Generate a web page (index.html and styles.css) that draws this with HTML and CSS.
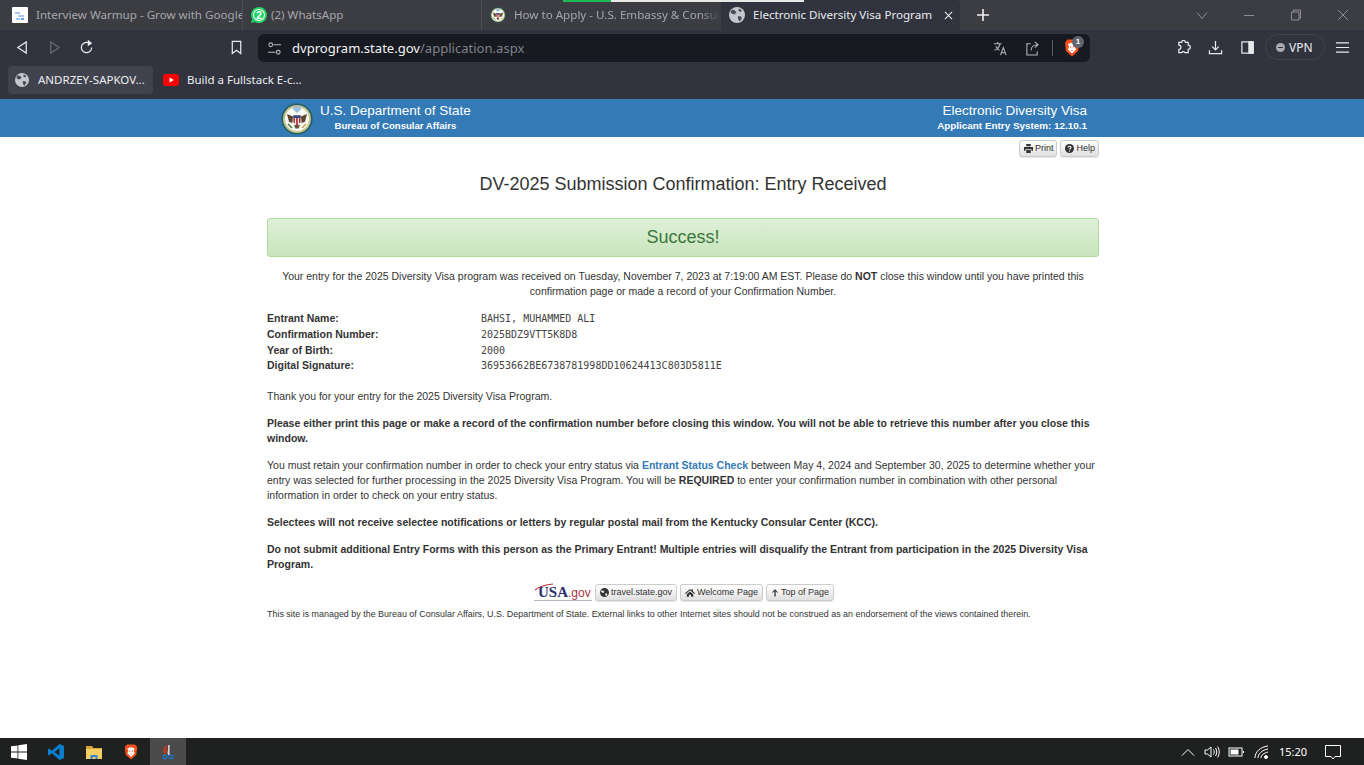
FILE: index.html
```html
<!DOCTYPE html>
<html lang="en">
<head>
    <meta charset="UTF-8">
    <title>Electronic Diversity Visa Program</title>
    <link rel="stylesheet" href="styles.css">
</head>
<body>
<div class="app">
    <!-- Browser tabs -->
    <div class="tabstrip">
        <div class="progress"><span class="progress-green"></span><span class="progress-white"></span></div>
        <div class="tab tab-first">
            <svg class="fav" viewBox="0 0 16 16"><rect width="16" height="16" rx="1" fill="#fff"/><path d="M3 6h5M6 9h6M4 12h4" stroke="#8ab4e8" stroke-width="1.6"/><path d="M9 12h3" stroke="#4285f4" stroke-width="1.6"/></svg>
            <span class="tab-title">Interview Warmup - Grow with Google</span>
        </div>
        <div class="tab tab-wa">
            <svg class="fav" viewBox="0 0 16 16"><path d="M8 0a8 8 0 0 0-6.800 12.200L0 16l3.900-1.100A8 8 0 1 0 8 0z" fill="#25d366"/><circle cx="8" cy="8" r="6" fill="#fff"/><circle cx="8" cy="8" r="5" fill="#25d366"/><text x="8" y="11.500" class="wa-count">2</text></svg>
            <span class="tab-title">(2) WhatsApp</span>
        </div>
        <div class="tab tab-third">
            <svg class="fav" viewBox="0 0 16 16"><use href="#seal"/></svg>
            <span class="tab-title tab-fade">How to Apply - U.S. Embassy &amp; Consulate</span>
        </div>
        <div class="tab tab-active">
            <svg class="fav" viewBox="0 0 16 16"><use href="#globe"/></svg>
            <span class="tab-title">Electronic Diversity Visa Program</span>
            <svg class="tab-close" viewBox="0 0 10 10"><path d="M1 1l8 8M9 1l-8 8"/></svg>
        </div>
        <svg class="tab-new" viewBox="0 0 12 12"><path d="M6 0v12M0 6h12"/></svg>
        <div class="win-controls">
            <svg viewBox="0 0 12 12"><path d="M1 3.500l5 6 5-6"/></svg>
            <svg viewBox="0 0 12 12"><path d="M1 6.500h10"/></svg>
            <svg viewBox="0 0 12 12"><path d="M1.500 3h7.500v8h-7.500zM3.500 3V1h7v8h-1.500"/></svg>
            <svg viewBox="0 0 12 12"><path d="M1 1l10 10M11 1L1 11"/></svg>
        </div>
    </div>

    <!-- Address bar -->
    <div class="toolbar">
        <svg class="tool" viewBox="0 0 16 16"><path d="M12 2v12L3 8z"/></svg>
        <svg class="tool tool-off" viewBox="0 0 16 16"><path d="M4 2v12l9-6z"/></svg>
        <svg class="tool" viewBox="0 0 16 16"><path d="M13.500 8A5.500 5.500 0 1 1 11 3.400"/><path d="M10 1l3 2.500-3 2z" fill="#e8eaed"/></svg>
        <svg class="tool tool-mark" viewBox="0 0 16 16"><path d="M3.500 1.500h9v13L8 11l-4.500 3.500z"/></svg>
        <div class="urlbar">
            <svg class="tool-sm" viewBox="0 0 16 16"><circle cx="4" cy="4" r="2"/><path d="M7 4h8M1 12h8"/><circle cx="12" cy="12" r="2"/></svg>
            <span class="url"><span class="url-host">dvprogram.state.gov</span>/application.aspx</span>
            <svg class="tool-sm url-translate" viewBox="0 0 16 16"><path d="M1 3h8M5 1v2M7.500 3C7 6 4.500 8.500 1.500 10M3 5.500c1 2 2.500 3.500 4 4.500M8 15l3-8 3 8M9.200 12.500h3.600"/></svg>
            <svg class="tool-sm url-share" viewBox="0 0 16 16"><path d="M6 3H2v12h11v-4M6.500 10c0-4 3-6 7-6M10.500 1l3.500 3-3.500 3"/></svg>
            <span class="url-sep"></span>
            <span class="shield">
                <svg class="brave" viewBox="0 0 16 18"><use href="#brave"/></svg>
                <span class="badge">1</span>
            </span>
        </div>
        <svg class="tool tool-ext" viewBox="0 0 16 16"><path d="M6 2.500a2 2 0 0 1 4 0h3v3a2 2 0 0 1 0 4.500v3.500H9.500a2 2 0 0 0-3.500 0H3V10a2 2 0 0 0 0-4.500V2.500z"/></svg>
        <svg class="tool" viewBox="0 0 16 16"><path d="M8 1v9M4.500 7L8 10.500 11.500 7M1.500 11v3.500h13V11"/></svg>
        <svg class="tool tool-side" viewBox="0 0 16 16"><rect x="2" y="2" width="12" height="12"/><rect x="9.500" y="2" width="4.500" height="12" fill="#e8eaed"/></svg>
        <div class="vpn"><span class="vpn-dot"></span>VPN</div>
        <svg class="tool tool-menu" viewBox="0 0 16 16"><path d="M1 3h14M1 8h14M1 13h14"/></svg>
    </div>

    <!-- Bookmarks -->
    <div class="bookmarks">
        <div class="bookmark bookmark-active">
            <svg class="fav-sm" viewBox="0 0 16 16"><use href="#globe"/></svg>
            <span class="bookmark-name">ANDRZEY-SAPKOV...</span>
        </div>
        <div class="bookmark">
            <svg class="fav-yt" viewBox="0 0 16 12"><rect width="16" height="12" rx="3" fill="#f00"/><path d="M6.500 3.500v5L11 6z" fill="#fff"/></svg>
            <span class="bookmark-name">Build a Fullstack E-c...</span>
        </div>
    </div>

    <!-- Page -->
    <div class="page">
        <header class="site-head">
            <div class="wrap site-head-inner">
                <div class="dept">
                    <svg class="seal" viewBox="0 0 16 16"><use href="#seal"/></svg>
                    <div>
                        <div class="head-title">U.S. Department of State</div>
                        <div class="head-sub head-sub-left">Bureau of Consular Affairs</div>
                    </div>
                </div>
                <div class="system">
                    <div class="head-title">Electronic Diversity Visa</div>
                    <div class="head-sub head-sub-right">Applicant Entry System: 12.10.1</div>
                </div>
            </div>
        </header>

        <main class="wrap">
            <div class="page-tools">
                <a class="small-btn">
                    <svg class="fa" viewBox="0 0 12 12"><path d="M3 0h6v3H3zM0 4h12v5h-2V7H2v2H0zM3 8h6v4H3z"/></svg>Print
                </a>
                <a class="small-btn">
                    <svg class="fa" viewBox="0 0 12 12"><circle cx="6" cy="6" r="6"/><path class="fa-cut" d="M4 4.500C4 2.500 8 2.500 8 4.500 8 6 6 5.800 6 7.300M6 8.500v1.500"/></svg>Help
                </a>
            </div>

            <h1>DV-2025 Submission Confirmation: Entry Received</h1>

            <div class="alert-success">Success!</div>

            <p class="received">Your entry for the 2025 Diversity Visa program was received on Tuesday, November 7, 2023 at 7:19:00 AM EST. Please do <b>NOT</b> close this window until you have printed this confirmation page or made a record of your Confirmation Number.</p>

            <dl class="details">
                <dt>Entrant Name:</dt><dd>BAHSI, MUHAMMED ALI</dd>
                <dt>Confirmation Number:</dt><dd>2025BDZ9VTT5K8D8</dd>
                <dt>Year of Birth:</dt><dd>2000</dd>
                <dt>Digital Signature:</dt><dd>36953662BE6738781998DD10624413C803D5811E</dd>
            </dl>

            <p>Thank you for your entry for the 2025 Diversity Visa Program.</p>
            <p><b>Please either print this page or make a record of the confirmation number before closing this window. You will not be able to retrieve this number after you close this window.</b></p>
            <p>You must retain your confirmation number in order to check your entry status via <a class="link">Entrant Status Check</a> between May 4, 2024 and September 30, 2025 to determine whether your entry was selected for further processing in the 2025 Diversity Visa Program. You will be <b>REQUIRED</b> to enter your confirmation number in combination with other personal information in order to check on your entry status.</p>
            <p><b>Selectees will not receive selectee notifications or letters by regular postal mail from the Kentucky Consular Center (KCC).</b></p>
            <p><b>Do not submit additional Entry Forms with this person as the Primary Entrant! Multiple entries will disqualify the Entrant from participation in the 2025 Diversity Visa Program.</b></p>

            <div class="foot-links">
                <span class="usagov">
                    <svg class="usagov-swoosh" viewBox="0 0 20 8"><path d="M1 7C6 3 12 1.500 19 1" fill="none" stroke="#b5343c" stroke-width="1.100"/></svg>
                    <span class="usagov-usa">USA</span><span class="usagov-gov">.gov</span>
                </span>
                <a class="small-btn">
                    <svg class="fa" viewBox="0 0 12 12"><use href="#globe-solid"/></svg>travel.state.gov
                </a>
                <a class="small-btn">
                    <svg class="fa fa-wide" viewBox="0 0 14 12"><path d="M7 1L0 7l1 1 6-5 6 5 1-1-3-2.600V1.500H9.500V3zM2.500 8.500L7 4.500l4.500 4V12H8.500V9h-3v3h-3z"/></svg>Welcome Page
                </a>
                <a class="small-btn">
                    <svg class="fa fa-narrow" viewBox="0 0 12 12"><path d="M6 1L1.500 5.500l1 1L5 4v8h2V4l2.500 2.500 1-1z"/></svg>Top of Page
                </a>
            </div>
            <p class="managed">This site is managed by the Bureau of Consular Affairs, U.S. Department of State. External links to other Internet sites should not be construed as an endorsement of the views contained therein.</p>
        </main>
    </div>

    <!-- Windows taskbar -->
    <footer class="taskbar">
        <div class="task-icon">
            <svg class="task-svg" viewBox="0 0 16 16"><path d="M0 2.300l6.500-.9v6.200H0zM7.300 1.300L16 0v7.600H7.300zM0 8.400h6.500v6.200L0 13.700zM7.300 8.400H16V16l-8.700-1.200z" fill="#fff"/></svg>
        </div>
        <div class="task-icon">
            <svg class="task-svg" viewBox="0 0 16 16"><path d="M11.500 0L16 2v12l-4.500 2L4 9.200 1.200 11.400 0 10.800V5.200l1.200-.6L4 6.800z" fill="#0e7fd0"/><path d="M11.500 4.200L6.500 8l5 3.800z" fill="#1f2020"/></svg>
        </div>
        <div class="task-icon">
            <svg class="task-svg" viewBox="0 0 16 16"><path d="M0 2h6l1.500 2H16v3H0z" fill="#d9a53a"/><path d="M0 5h16v10H0z" fill="#f5cf63"/><path d="M4.500 15v-4h7v4H9.500v-2h-3v2z" fill="#2f86d1"/></svg>
        </div>
        <div class="task-icon">
            <svg class="task-svg" viewBox="0 0 16 18"><use href="#brave"/></svg>
        </div>
        <div class="task-icon task-active">
            <svg class="task-svg" viewBox="0 0 16 16"><path d="M7 1a6 6 0 0 0-2 10l2-3z" fill="#b5391e"/><path d="M9 1L8 10l1 1z" fill="#ddd" stroke="#ddd"/><circle cx="5" cy="13" r="1.800" fill="none" stroke="#1b78d0" stroke-width="1.300"/><circle cx="11" cy="13" r="1.800" fill="none" stroke="#1b78d0" stroke-width="1.300"/></svg>
        </div>
        <div class="tray">
            <svg class="tray-svg" viewBox="0 0 16 14"><path d="M2 10.500l6-6 6 6"/></svg>
            <svg class="tray-svg" viewBox="0 0 16 14"><path d="M1 5h2.500L7 2v10L3.500 9H1zM9.500 4.500c1 1.500 1 3.500 0 5M11.500 3c1.700 2.500 1.700 5.500 0 8M13.500 1.500c2.300 3 2.300 8 0 11"/></svg>
            <svg class="tray-svg" viewBox="0 0 16 14"><rect x="1" y="3" width="13" height="8"/><rect x="2.500" y="4.500" width="8" height="5" fill="#fff" stroke="none"/><path d="M15.500 6v2"/></svg>
            <svg class="tray-svg tray-wifi" viewBox="0 0 16 14"><path d="M1 13C1 7 6 2 14 1M4 13c0-4 4-8 10-9M7 13c0-3 3-5 7-6"/><circle cx="12" cy="12" r="1.500" fill="#fff"/></svg>
            <span class="clock">15:20</span>
            <svg class="tray-note" viewBox="0 0 16 16"><path d="M.5 1.500h15v11H10L8 15l-2-2.500H.5z"/></svg>
        </div>
    </footer>
</div>

<!-- Shared icons -->
<svg class="defs" aria-hidden="true">
    <symbol id="globe" viewBox="0 0 16 16">
        <circle cx="8" cy="8" r="8" fill="#c4c7cc"/>
        <path d="M3 2.500l3 1 1.500 2-2 2-3-1-1-1.500zM9 9l3 .5 1 2-2.500 3-1.500-2.500zM10 1.500l3 2-1.500 1.500-2-1z" fill="#4a4d57"/>
    </symbol>
    <symbol id="globe-solid" viewBox="0 0 12 12">
        <path d="M6 0a6 6 0 1 0 0 12A6 6 0 0 0 6 0zM2 3l2.500.5L6 5 4.500 6.500 2 5.500 1.300 4.500zM7 7l2.500.5.500 1.500-2 2-1-2z"/>
    </symbol>
    <symbol id="brave" viewBox="0 0 16 18">
        <path d="M3.500 .5h9L15 3.500 14 12l-6 5.500L2 12 1 3.500z" fill="#f1501f"/>
        <path d="M4 5l2.500-1h3L12 5l-1 3 1 2.500-4 4-4-4L5 8z" fill="#fff"/>
        <path d="M5.500 7l2 1-1 1zM10.500 7l-2 1 1 1zM7 11h2l-1 1.500z" fill="#f1501f"/>
    </symbol>
    <symbol id="seal" viewBox="0 0 16 16">
        <circle cx="8" cy="8" r="7.800" fill="#1f5f62"/>
        <circle cx="8" cy="8" r="7" fill="#c9c48e"/>
        <circle cx="8" cy="8" r="6" fill="#fbfbf6"/>
        <path d="M5.800 3a2.400 2.400 0 0 1 4.400 0L8 5z" fill="#9cc0de"/>
        <path d="M3 5.500l3 1.200-.3 3.300-1.700-.6zM13 5.500l-3 1.200.3 3.300 1.700-.6z" fill="#5b4630"/>
        <path d="M6.500 11h3l-.7 1.700H7.200z" fill="#6b5740"/>
        <path d="M6.200 6.200h3.600v3.400L8 11.300 6.200 9.600z" fill="#b5343c"/>
        <rect x="6.200" y="6.200" width="3.600" height="1.300" fill="#2d4f87"/>
        <path d="M7.300 7.500v3M8.700 7.500v3" stroke="#fff" stroke-width=".5"/>
        <path d="M3.500 10.500l2 2" stroke="#4f7a3a" stroke-width=".8"/>
        <path d="M12.500 10.500l-2 2" stroke="#c8a24a" stroke-width=".8"/>
    </symbol>
</svg>
</body>
</html>
```

FILE: styles.css
```css
* {
    box-sizing: border-box;
}

body {
    margin: 0;
    font-family: "Liberation Sans", Arial, sans-serif;
    color: #333;
    overflow: hidden;
}

.app {
    display: flex;
    flex-direction: column;
    height: 100vh;
}

.defs {
    display: none;
}

/* Tabs */
.tabstrip {
    position: relative;
    display: flex;
    align-items: stretch;
    flex: 0 0 30px;
    background: #3c3c43;
    font-family: "Noto Sans", sans-serif;
    font-size: 11.600px;
    color: #a6a7ab;
}

.progress {
    position: absolute;
    top: 0;
    left: 563px;
    display: flex;
    height: 2px;
}

.progress-green {
    width: 48px;
    background: #1db954;
}

.progress-white {
    width: 193px;
    background: #e8e8e8;
}

.tab {
    display: flex;
    align-items: center;
    width: 239px;
    white-space: nowrap;
    overflow: hidden;
}

.tab-first {
    width: 243px;
    padding-left: 12px;
    border-right: 1px solid #4c4c53;
}

.tab-wa {
    padding-left: 8px;
    border-right: 1px solid #4c4c53;
}

.tab-third {
    padding-left: 8px;
}

.tab-title {
    margin-bottom: 2px;
}

.fav {
    flex: none;
    width: 16px;
    height: 16px;
    margin-right: 8px;
}

.tab-wa .fav {
    margin-right: 4px;
}

.wa-count {
    font-family: "Liberation Sans", sans-serif;
    font-size: 10px;
    font-weight: bold;
    fill: #fff;
    text-anchor: middle;
}

.tab-fade {
    overflow: hidden;
    -webkit-mask-image: linear-gradient(to right, #000 90%, transparent);
    mask-image: linear-gradient(to right, #000 90%, transparent);
}

.tab-active {
    width: 239px;
    padding-left: 8px;
    background: #31343f;
    border-radius: 4px 4px 0 0;
    color: #e8eaed;
}

.tab-close {
    flex: none;
    width: 9px;
    height: 9px;
    margin-left: 12px;
    fill: none;
    stroke: #e8eaed;
    stroke-width: 1.200;
}

.tab-new {
    width: 12px;
    height: 12px;
    margin: 9px 0 0 17px;
    fill: none;
    stroke: #f0f0f0;
    stroke-width: 1.600;
}

.win-controls {
    display: flex;
    align-items: center;
    gap: 35px;
    margin-left: auto;
    padding-right: 15px;
}

.win-controls svg {
    width: 12px;
    height: 12px;
    fill: none;
    stroke: #8e8f94;
    stroke-width: 1;
}

/* Toolbar */
.toolbar {
    display: flex;
    align-items: center;
    flex: 0 0 34px;
    padding-left: 15px;
    background: #31343f;
}

.tool {
    flex: none;
    width: 15px;
    height: 15px;
    margin-right: 17px;
    fill: none;
    stroke: #e8eaed;
    stroke-width: 1.300;
}

.tool-off {
    stroke: #666a75;
}

.tool-mark {
    margin-left: 118px;
    margin-right: 14px;
}

.tool-ext {
    margin-left: 86px;
}

.tool-side {
    margin-right: 10px;
}

.tool-menu {
    margin: 0 0 0 10px;
}

.tool-sm {
    flex: none;
    width: 15px;
    height: 15px;
    fill: none;
    stroke: #b5b8bf;
    stroke-width: 1.100;
}

.urlbar {
    display: flex;
    align-items: center;
    flex: 0 0 832px;
    height: 28px;
    margin-top: 2px;
    padding: 0 9px;
    background: #181a21;
    border-radius: 6px;
}

.url {
    margin-left: 10px;
    font-family: "Noto Sans", sans-serif;
    font-size: 13.050px;
    color: #7f828b;
}

.url-host {
    color: #f1f2f4;
}

.url-translate {
    margin-left: auto;
}

.url-share {
    margin-left: 17px;
}

.url-sep {
    width: 1px;
    height: 16px;
    margin: 0 11px 0 12px;
    background: #5b5e68;
}

.shield {
    position: relative;
    display: flex;
    margin-right: 1px;
}

.brave {
    width: 16px;
    height: 18px;
}

.badge {
    position: absolute;
    top: -3px;
    left: 8px;
    width: 12px;
    height: 12px;
    border-radius: 50%;
    background: #5f636e;
    color: #fff;
    font-size: 8px;
    font-weight: bold;
    line-height: 12px;
    text-align: center;
}

.vpn {
    display: flex;
    align-items: center;
    gap: 4px;
    width: 60px;
    height: 26px;
    padding-left: 10px;
    border: 1px solid #41444f;
    border-radius: 13px;
    font-family: "Noto Sans", sans-serif;
    font-size: 12px;
    color: #e8eaed;
}

.vpn-dot {
    position: relative;
    width: 9px;
    height: 9px;
    border-radius: 50%;
    background: #a8abb3;
}

.vpn-dot::after {
    content: "";
    position: absolute;
    top: 4px;
    left: 2px;
    width: 5px;
    height: 1px;
    background: #31343f;
}

/* Bookmarks */
.bookmarks {
    display: flex;
    align-items: center;
    flex: 0 0 35px;
    padding: 0 8px 3px;
    background: #31343f;
    font-family: "Noto Sans", sans-serif;
    font-size: 11.500px;
    color: #eceef1;
    white-space: nowrap;
}

.bookmark {
    display: flex;
    align-items: center;
    height: 28px;
    padding: 0 8px 0 10px;
}

.bookmark-active {
    width: 145px;
    padding-left: 7px;
    background: #40434e;
    border-radius: 4px;
}

.bookmark-name {
    margin-bottom: 2px;
}

.fav-sm {
    flex: none;
    width: 14px;
    height: 14px;
    margin-right: 9px;
}

.fav-yt {
    flex: none;
    width: 16px;
    height: 12px;
    margin-right: 8px;
}

/* Page */
.page {
    flex: 1;
    background: #fff;
    border-top: 1px solid #3a7fbc;
    font-size: 10.500px;
    line-height: 15px;
}

.wrap {
    width: 832px;
    margin-left: 267px;
}

.site-head {
    height: 37px;
    background: #337ab7;
    color: #fff;
}

.site-head-inner {
    display: flex;
    justify-content: space-between;
    height: 100%;
    padding: 3px 12px 0 14px;
}

.dept {
    display: flex;
    gap: 7px;
}

.seal {
    width: 32px;
    height: 32px;
}

.head-title {
    font-size: 13.500px;
    line-height: 15px;
}

.head-sub {
    margin-top: 1px;
    font-weight: bold;
    line-height: 14px;
}

.head-sub-left {
    font-size: 9.600px;
    text-align: center;
}

.head-sub-right {
    font-size: 9.900px;
}

.system {
    text-align: right;
}

.page-tools {
    display: flex;
    justify-content: flex-end;
    gap: 3px;
    height: 20px;
    padding-top: 3px;
}

.page-tools .small-btn {
    padding-right: 3px;
}

.small-btn {
    display: inline-flex;
    align-items: center;
    gap: 2px;
    height: 17px;
    padding: 0 4px;
    border: 1px solid #ccc;
    border-radius: 3px;
    background: linear-gradient(#fff, #e0e0e0);
    box-shadow: 0 1px 1px rgba(0, 0, 0, 0.1);
    font-size: 9px;
    color: #333;
}

.fa {
    width: 9px;
    height: 9px;
    fill: #333;
}

.fa-wide {
    width: 10px;
}

.fa-narrow {
    width: 8px;
}

.fa-cut {
    fill: none;
    stroke: #fff;
    stroke-width: 1.500;
}

h1 {
    margin: 17px 0 24px;
    font-size: 18px;
    font-weight: normal;
    line-height: 20px;
    text-align: center;
}

.alert-success {
    height: 39px;
    border: 1px solid #b2dba1;
    border-radius: 3px;
    background: linear-gradient(#dff0d8, #c8e5bc);
    color: #3c763d;
    font-size: 18px;
    line-height: 36px;
    text-align: center;
}

p {
    margin: 0 0 12px;
}

.received {
    margin: 12px 0;
    text-align: center;
}

.details {
    display: grid;
    grid-template-columns: 214px 1fr;
    grid-auto-rows: 15.800px;
    margin: 0 0 14.600px;
}

.details dt {
    font-weight: bold;
}

.details dd {
    margin: 0;
    font-family: "DejaVu Sans Mono", monospace;
    font-size: 10px;
    color: #444;
}

.link {
    color: #337ab7;
    font-weight: bold;
}

.foot-links {
    display: flex;
    align-items: center;
    gap: 3px;
    margin-top: -1px;
    height: 19px;
    padding-left: 267px;
}

.usagov {
    position: relative;
    flex: none;
    width: 58px;
    margin-top: 2px;
    border-bottom: 1px solid #b9b4c4;
    line-height: 14px;
    white-space: nowrap;
}

.usagov-swoosh {
    position: absolute;
    top: -2px;
    left: 0;
    width: 20px;
    height: 8px;
}

.usagov-usa {
    margin-left: 4px;
    font-family: "Liberation Serif", serif;
    font-size: 15px;
    font-weight: bold;
    color: #2b2f6b;
}

.usagov-gov {
    font-size: 12px;
    color: #a8323e;
}

.managed {
    margin: 5px 0 0;
    font-size: 8.940px;
}

/* Taskbar */
.taskbar {
    display: flex;
    align-items: stretch;
    flex: 0 0 27px;
    background: #1f2020;
    color: #fff;
}

.task-icon {
    display: flex;
    align-items: center;
    justify-content: center;
    width: 37.500px;
}

.task-active {
    width: 36px;
    background: #4b4b4b;
}

.task-svg {
    width: 16px;
    height: 16px;
}

.tray {
    display: flex;
    align-items: center;
    gap: 8px;
    margin-left: auto;
    padding-right: 23px;
}

.tray-svg {
    width: 16px;
    height: 14px;
    fill: none;
    stroke: #fff;
    stroke-width: 1;
}

.tray-wifi {
    margin-left: 2px;
}

.clock {
    margin-left: 1px;
    font-family: "Noto Sans", sans-serif;
    font-size: 11px;
}

.tray-note {
    width: 16px;
    height: 16px;
    margin-left: 10px;
    fill: none;
    stroke: #fff;
    stroke-width: 1;
}
```
